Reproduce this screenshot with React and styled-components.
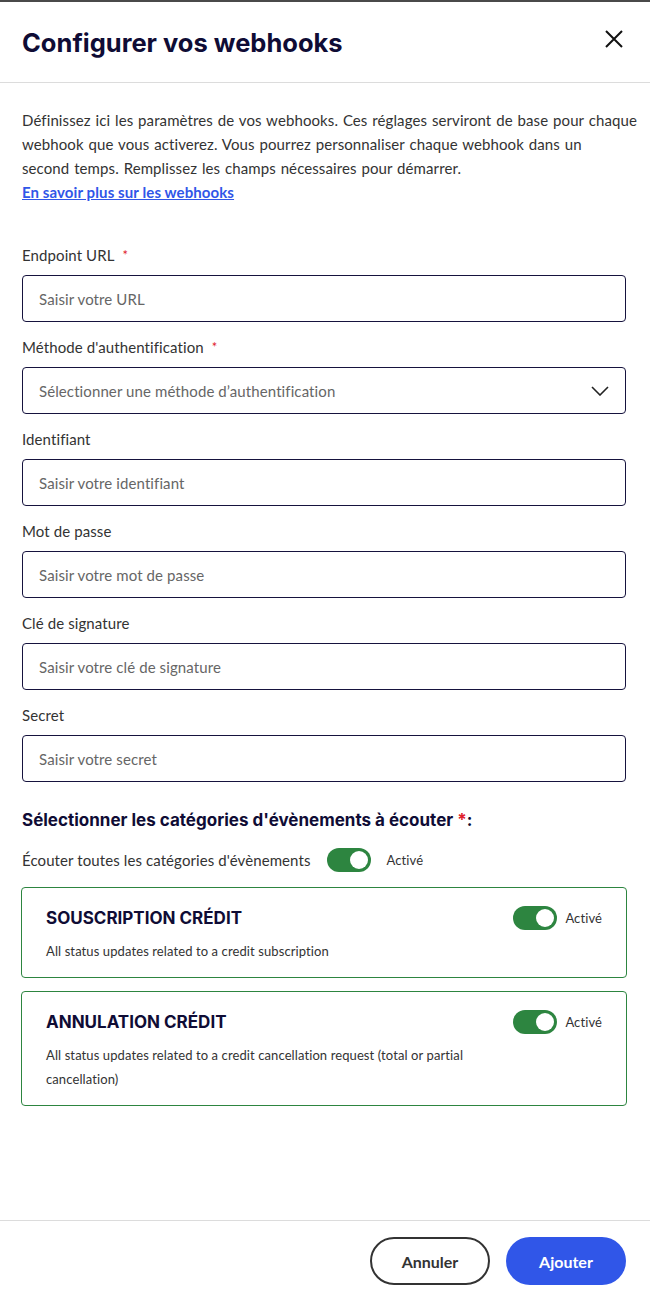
import React from "react";
import styled, { createGlobalStyle } from "styled-components";

const GlobalStyle = createGlobalStyle`
  html, body {
    margin: 0;
    padding: 0;
    background: #ffffff;
  }
  body {
    font-family: "Lato", "Noto Sans", sans-serif;
    color: #333333;
    letter-spacing: 0.1px;
  }
  * {
    box-sizing: border-box;
  }
`;

const Modal = styled.div`
  width: 650px;
  height: 1296px;
  display: flex;
  flex-direction: column;
  border-top: 2px solid #4a4a4a;
  background: #fff;
`;

const Header = styled.div`
  height: 81px;
  flex-shrink: 0;
  display: flex;
  align-items: center;
  justify-content: space-between;
  padding: 0 24px 0 22px;
  border-bottom: 1px solid #dcdcdc;
`;

const Title = styled.h1`
  margin: 0;
  font-family: "Inter", sans-serif;
  font-weight: 700;
  font-size: 25.5px;
  letter-spacing: 0;
  color: #0f0c35;
`;

const CloseButton = styled.button`
  border: none;
  background: none;
  padding: 0;
  margin-top: -6px;
  width: 24px;
  height: 24px;
  display: flex;
  align-items: center;
  justify-content: center;
  cursor: pointer;
`;

const Body = styled.div`
  flex: 1;
  padding: 25px 24px 0 22px;
  display: flex;
  flex-direction: column;
`;

const Intro = styled.p`
  margin: 0;
  font-size: 15px;
  line-height: 24px;
  word-spacing: 0.9px;
  white-space: nowrap;
  color: #333;
`;

const Link = styled.a`
  display: block;
  font-size: 15px;
  line-height: 24px;
  font-weight: 700;
  color: #3056e8;
  text-decoration: underline;
`;

const Form = styled.div`
  margin-top: 39px;
  display: flex;
  flex-direction: column;
`;

const Field = styled.div`
  display: flex;
  flex-direction: column;
  margin-bottom: 13px;
`;

const Label = styled.label`
  font-size: 15px;
  line-height: 24px;
  margin-bottom: 8px;
  color: #333;
`;

const Star = styled.span`
  color: #e0202a;
  font-size: 13px;
  margin-left: 8px;
  vertical-align: top;
`;

const InputBox = styled.div`
  height: 47px;
  border: 1px solid #16133e;
  border-radius: 4px;
  display: flex;
  align-items: center;
  justify-content: space-between;
  padding: 0 16px 0 16px;
  font-size: 15px;
  color: #666;
`;

const SectionTitle = styled.h2`
  margin: 15px 0 0;
  font-family: "Inter", sans-serif;
  font-size: 17px;
  font-weight: 700;
  color: #0f0c35;
  letter-spacing: 0;
`;

const RedStar = styled.span`
  color: #e0202a;
`;

const AllRow = styled.div`
  display: flex;
  align-items: center;
  margin-top: 18px;
  font-size: 15px;
  color: #333;
`;

const Track = styled.span`
  width: 44px;
  height: 24px;
  border-radius: 12px;
  background: #2d8540;
  position: relative;
  flex-shrink: 0;
  margin-left: ${p => p.$ml || 0}px;

  &::after {
    content: "";
    position: absolute;
    right: 3px;
    top: 3px;
    width: 18px;
    height: 18px;
    border-radius: 50%;
    background: #fff;
  }
`;

const State = styled.span`
  font-size: 13px;
  color: #333;
  margin-left: ${p => p.$ml}px;
`;

const Card = styled.div`
  border: 1px solid #2d8540;
  border-radius: 4px;
  margin: ${p => (p.$first ? "15px" : "13px")} -1px 0;
  padding: 17px 24px 14px 24px;
`;

const CardHead = styled.div`
  display: flex;
  align-items: center;
  justify-content: space-between;
  height: 26px;
`;

const CardTitle = styled.div`
  font-family: "Inter", sans-serif;
  font-weight: 700;
  font-size: 17px;
  letter-spacing: 0;
  color: #0f0c35;
`;

const Toggle = styled.div`
  display: flex;
  align-items: center;
`;

const CardText = styled.p`
  margin: 8px 0 0;
  font-size: 13px;
  line-height: 24px;
  color: #333;
  max-width: 460px;
`;

const Footer = styled.div`
  height: 76px;
  flex-shrink: 0;
  border-top: 1px solid #dcdcdc;
  display: flex;
  align-items: flex-start;
  justify-content: flex-end;
  gap: 16px;
  padding: 16px 24px 0 0;
`;

const Button = styled.button`
  width: 120px;
  height: 48px;
  border-radius: 24px;
  font-family: "Lato", sans-serif;
  font-weight: 700;
  font-size: 16px;
  cursor: pointer;
  border: ${p => (p.$primary ? "none" : "2px solid #333")};
  background: ${p => (p.$primary ? "#3056e8" : "#fff")};
  color: ${p => (p.$primary ? "#fff" : "#333")};
`;

const fields = [
  { label: "Endpoint URL", placeholder: "Saisir votre URL", required: true },
  {
    label: "Méthode d'authentification",
    placeholder: "Sélectionner une méthode d’authentification",
    required: true,
    select: true
  },
  { label: "Identifiant", placeholder: "Saisir votre identifiant" },
  { label: "Mot de passe", placeholder: "Saisir votre mot de passe" },
  { label: "Clé de signature", placeholder: "Saisir votre clé de signature" },
  { label: "Secret", placeholder: "Saisir votre secret" }
];

const cards = [
  {
    title: "SOUSCRIPTION CRÉDIT",
    text: "All status updates related to a credit subscription"
  },
  {
    title: "ANNULATION CRÉDIT",
    text: "All status updates related to a credit cancellation request (total or partial cancellation)"
  }
];

const App = () => (
  <React.Fragment>
    <GlobalStyle />
    <Modal>
      <Header>
        <Title>Configurer vos webhooks</Title>
        <CloseButton aria-label="Fermer">
          <svg width="18" height="18" viewBox="0 0 18 18">
            <path d="M1 1L17 17M17 1L1 17" stroke="#111" strokeWidth="2" />
          </svg>
        </CloseButton>
      </Header>
      <Body>
        <Intro>
          Définissez ici les paramètres de vos webhooks. Ces réglages serviront de base pour chaque
          <br />
          webhook que vous activerez. Vous pourrez personnaliser chaque webhook dans un
          <br />
          second temps. Remplissez les champs nécessaires pour démarrer.
        </Intro>
        <Link href="#">En savoir plus sur les webhooks</Link>
        <Form>
          {fields.map(f => (
            <Field key={f.label}>
              <Label>
                {f.label}
                {f.required && <Star>*</Star>}
              </Label>
              <InputBox>
                {f.placeholder}
                {f.select && (
                  <svg width="18" height="10" viewBox="0 0 18 10">
                    <path d="M1 1L9 9L17 1" fill="none" stroke="#222" strokeWidth="1.6" />
                  </svg>
                )}
              </InputBox>
            </Field>
          ))}
          <SectionTitle>
            Sélectionner les catégories d'évènements à écouter <RedStar>*</RedStar>:
          </SectionTitle>
          <AllRow>
            Écouter toutes les catégories d'évènements
            <Track $ml={16} />
            <State $ml={16}>Activé</State>
          </AllRow>
          {cards.map((c, i) => (
            <Card key={c.title} $first={i === 0}>
              <CardHead>
                <CardTitle>{c.title}</CardTitle>
                <Toggle>
                  <Track />
                  <State $ml={8}>Activé</State>
                </Toggle>
              </CardHead>
              <CardText>{c.text}</CardText>
            </Card>
          ))}
        </Form>
      </Body>
      <Footer>
        <Button>Annuler</Button>
        <Button $primary>Ajouter</Button>
      </Footer>
    </Modal>
  </React.Fragment>
);

export default App;
